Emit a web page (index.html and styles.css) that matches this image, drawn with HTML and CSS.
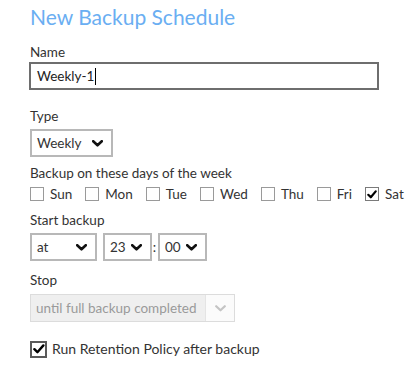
FILE: index.html
```html
<!DOCTYPE html>
<html>
<head>
<meta charset="utf-8">
<link rel="stylesheet" href="styles.css">
</head>
<body>
<div class="page">
  <h1 class="title">New Backup Schedule</h1>

  <div class="label label-name">Name</div>
  <div class="text-input"><span class="value">Weekly-1</span><span class="caret"></span></div>

  <div class="label label-type">Type</div>
  <div class="select select-type">
    <span class="sel-text">Weekly</span>
    <svg class="chev" width="11" height="7" viewBox="0 0 11 7"><path d="M1.2 1.2 L5.5 5.3 L9.8 1.2" fill="none" stroke="#111" stroke-width="2.6" stroke-linecap="round" stroke-linejoin="round"/></svg>
  </div>

  <div class="label label-days">Backup on these days of the week</div>
  <div class="days">
    <label class="day"><span class="box"></span>Sun</label>
    <label class="day"><span class="box"></span>Mon</label>
    <label class="day"><span class="box"></span>Tue</label>
    <label class="day"><span class="box"></span>Wed</label>
    <label class="day"><span class="box"></span>Thu</label>
    <label class="day"><span class="box"></span>Fri</label>
    <label class="day"><span class="box checked"><svg width="10" height="9" viewBox="0 0 10 9"><path d="M1.3 4.8 L3.8 7.3 L8.7 1.4" fill="none" stroke="#000" stroke-width="2.2" stroke-linecap="round" stroke-linejoin="round"/></svg></span>Sat</label>
  </div>

  <div class="label label-start">Start backup</div>
  <div class="time-row">
    <div class="select select-at">
      <span class="sel-text">at</span>
      <svg class="chev" width="11" height="7" viewBox="0 0 11 7"><path d="M1.2 1.2 L5.5 5.3 L9.8 1.2" fill="none" stroke="#111" stroke-width="2.6" stroke-linecap="round" stroke-linejoin="round"/></svg>
    </div>
    <div class="select select-num">
      <span class="sel-text">23</span>
      <svg class="chev" width="11" height="7" viewBox="0 0 11 7"><path d="M1.2 1.2 L5.5 5.3 L9.8 1.2" fill="none" stroke="#111" stroke-width="2.6" stroke-linecap="round" stroke-linejoin="round"/></svg>
    </div>
    <span class="colon">:</span>
    <div class="select select-num">
      <span class="sel-text">00</span>
      <svg class="chev" width="11" height="7" viewBox="0 0 11 7"><path d="M1.2 1.2 L5.5 5.3 L9.8 1.2" fill="none" stroke="#111" stroke-width="2.6" stroke-linecap="round" stroke-linejoin="round"/></svg>
    </div>
  </div>

  <div class="label label-stop">Stop</div>
  <div class="select select-disabled">
    <span class="sel-text">until full backup completed</span>
    <span class="arrow-part">
      <svg width="11" height="7" viewBox="0 0 11 7"><path d="M1.2 1.2 L5.5 5.3 L9.8 1.2" fill="none" stroke="#c4c4c4" stroke-width="2.2" stroke-linecap="round" stroke-linejoin="round"/></svg>
    </span>
  </div>

  <label class="retention"><span class="box box-big"><svg width="12" height="10" viewBox="0 0 12 10"><path d="M1.4 5.2 L4.4 8.2 L10.4 1.4" fill="none" stroke="#000" stroke-width="2.4" stroke-linecap="round" stroke-linejoin="round"/></svg></span>Run Retention Policy after backup</label>
</div>
</body>
</html>
```

FILE: styles.css
```css
html, body {
  margin: 0;
  padding: 0;
  background: #ffffff;
}

body {
  font-family: "Lato", "Open Sans", sans-serif;
  font-size: 13.5px;
  color: #333333;
  width: 412px;
  height: 373px;
  overflow: hidden;
}

.page {
  padding: 2px 0 0 30px;
  display: flex;
  flex-direction: column;
  align-items: flex-start;
}

.title {
  margin: 0;
  font-size: 21px;
  font-weight: 400;
  line-height: 30px;
  color: #6aaef2;
}

.label {
  line-height: 18px;
  color: #333333;
}

.label-name { margin-top: 11px; }
.label-type { margin-top: 17px; }
.label-days { margin-top: 7px; }
.label-start { margin-top: 7px; }
.label-stop { margin-top: 10px; }

.text-input {
  margin-top: 1px;
  margin-left: -1px;
  box-sizing: border-box;
  width: 350px;
  height: 28px;
  border: 2px solid #6e6e6e;
  display: flex;
  align-items: center;
  padding-left: 6px;
  color: #222;
}

.caret {
  display: inline-block;
  width: 1px;
  height: 17px;
  background: #000;
  margin-left: 1px;
}

.select {
  box-sizing: border-box;
  height: 28px;
  border: 2px solid #b8b8b8;
  display: flex;
  align-items: center;
  justify-content: space-between;
  padding: 0 8px 0 5px;
  color: #333;
  background: #fff;
}

.select-type {
  margin-top: 4px;
  width: 83px;
}

.days {
  display: flex;
  gap: 13px;
  line-height: 20px;
  margin-top: 2px;
}

.day {
  display: flex;
  align-items: center;
  gap: 6px;
}

.box {
  box-sizing: border-box;
  width: 14px;
  height: 14px;
  border: 1px solid #9a9a9a;
  background: #fff;
  display: flex;
  align-items: center;
  justify-content: center;
}

.box.checked {
  border-color: #7a7a7a;
}

.time-row {
  margin-top: 4px;
  display: flex;
  align-items: center;
}

.select-at { width: 67px; }
.select-num { width: 49px; margin-left: 6px; }

.colon {
  width: 7px;
  text-align: center;
  margin-left: -1px;
  margin-right: -6px;
  color: #333;
}

.select-disabled {
  margin-top: 5px;
  width: 205px;
  padding: 0 0 0 5px;
  background: #efefef;
  border: 1px solid #dcdcdc;
  color: #9a9a9a;
}

.arrow-part {
  align-self: stretch;
  width: 28px;
  background: #fbfbfb;
  border-left: 1px solid #e4e4e4;
  display: flex;
  align-items: center;
  justify-content: center;
}

.retention {
  margin-top: 17px;
  display: flex;
  align-items: center;
  gap: 5px;
  line-height: 20px;
  font-size: 14px;
  color: #333;
}

.box-big {
  width: 17px;
  height: 17px;
  border: 2px solid #5a5a5a;
}
```
